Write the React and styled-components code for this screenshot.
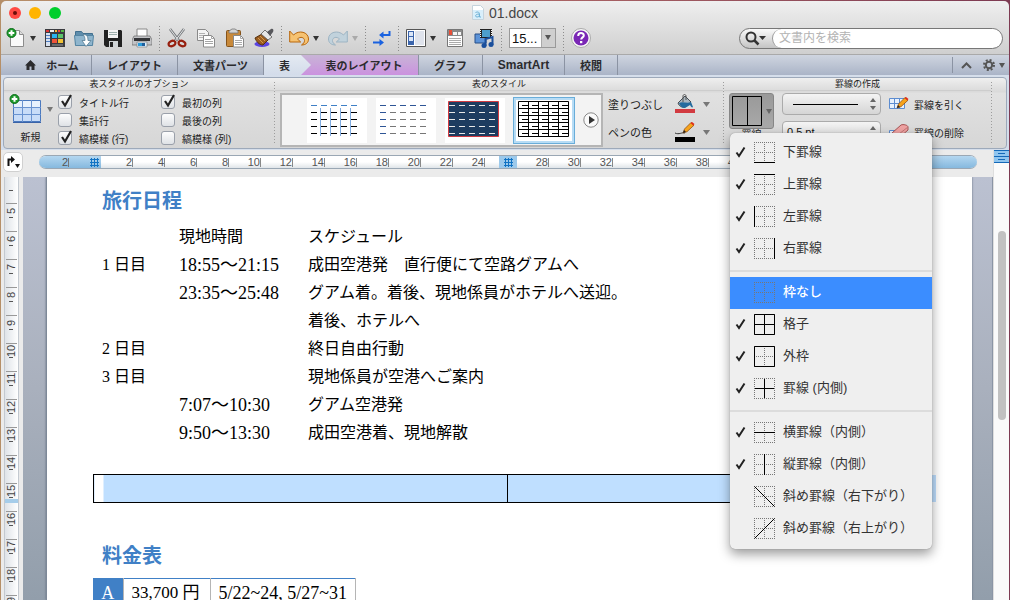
import { useState } from "react";
import styled, { createGlobalStyle, css } from "styled-components";

const sans = `"Liberation Sans", "Noto Sans CJK JP", sans-serif`;
const serif = `"Liberation Serif", "Noto Sans CJK JP", serif`;

const GlobalStyle = createGlobalStyle`
  * {
    box-sizing: border-box;
  }

  body {
    margin: 0;
    font-family: ${sans};
    color: #222;
    background: linear-gradient(90deg, #b58f68, #b9716a 40%, #7d3a52);
  }

  button {
    padding: 0;
    border: 0;
    background: none;
    color: inherit;
    font-family: inherit;
  }
`;

const Window = styled.div`
  display: flex;
  flex-direction: column;
  height: 100vh;
  overflow: hidden;
  border: solid transparent;
  border-width: 1px 1px 0;
`;

/* title bar and toolbar */

const Chrome = styled.header`
  border-bottom: 1px solid #a9a9a9;
  border-radius: 5px 5px 0 0;
  background: linear-gradient(#efefef, #cfcfcf);
`;

const TitleBar = styled.div`
  display: grid;
  grid-template-columns: 1fr auto 1fr;
  align-items: center;
  height: 23px;
  padding: 0 8px;
`;

const Lights = styled.div`
  display: flex;
  gap: 8px;
`;

const Light = styled.button`
  display: grid;
  place-items: center;
  width: 12px;
  height: 12px;
  border-radius: 50%;
  background: ${(props) => props.$color};

  i {
    width: 4px;
    height: 4px;
    border-radius: 50%;
    background: #6b0d0a;
  }
`;

const Title = styled.h1`
  display: flex;
  align-items: center;
  gap: 5px;
  margin: 0;
  font-size: 14px;
  font-weight: normal;
  color: #454545;
`;

const Toolbar = styled.div`
  display: flex;
  align-items: center;
  height: 30px;
  padding: 0 6px 2px 5px;
`;

const Tools = styled.div`
  display: flex;
  align-items: center;
  gap: 9px;
`;

const Split = styled.div`
  display: flex;
  align-items: center;
  gap: 4px;
`;

const ToolButton = styled.button`
  display: grid;
  place-items: center;
  width: ${(props) => props.$width || 20}px;
  height: 22px;
`;

const Divider = styled.div`
  width: 1px;
  height: 25px;
  margin: 0 7px;
  background: repeating-linear-gradient(#8d8d8d 0 1px, transparent 1px 3px);
`;

const ZoomBox = styled.label`
  position: relative;
  display: flex;
  width: 47px;
  height: 20px;
  border: 1px solid #999;
  background: #fff;

  select {
    width: 100%;
    padding: 0 0 0 2px;
    border: 0;
    appearance: none;
    background: linear-gradient(90deg, #fff 31px, #a9a9a9 31px 32px, #cfcfcf 32px);
    font: 13px ${sans};
    color: #111;
  }

  svg {
    position: absolute;
    right: 4px;
    top: 6px;
    pointer-events: none;
  }
`;

const Search = styled.label`
  display: flex;
  align-items: center;
  width: 264px;
  height: 21px;
  margin-left: auto;
  padding-left: 5px;
  border: 1px solid #777;
  border-radius: 11px;
  background: linear-gradient(#fafafa, #c4c4c4);
  overflow: hidden;

  input {
    flex: 1;
    min-width: 0;
    height: 19px;
    margin-left: 6px;
    padding: 0 6px;
    border: 0;
    border-left: 1px solid #999;
    border-radius: 10px;
    outline: 0;
    background: #fff;
    font: 12px/19px ${sans};
  }

  input::placeholder {
    color: #b3b3b3;
  }
`;

/* ribbon tabs */

const TabBar = styled.nav`
  display: flex;
  height: 20px;
  background: linear-gradient(#cfd5e0, #aab4c7);
`;

const Tab = styled.button`
  display: flex;
  align-items: center;
  justify-content: center;
  gap: 10px;
  width: ${(props) => props.$width}px;
  padding-left: ${(props) => (props.$kind === "home" ? 12 : 0)}px;
  border-right: 1px solid #8b93a3;
  font-size: ${(props) => (props.$latin ? 12 : 11)}px;
  font-weight: bold;
  color: #2b2b2e;

  ${(props) =>
    props.$kind === "active" &&
    css`
      z-index: 1;
      margin-right: -10px;
      padding-right: 6px;
      border-right: 0;
      background: linear-gradient(#e4eaf2, #d3dcea);
      clip-path: polygon(0 0, 37px 0, 100% 50%, 37px 100%, 0 100%);
    `}

  ${(props) =>
    props.$kind === "context" &&
    css`
      padding-left: 9px;
      background: linear-gradient(#c8b4d6, #cb92df);
    `}
`;

const TabTools = styled.div`
  display: flex;
  align-items: center;
  gap: 11px;
  height: 16px;
  margin: 2px 4px 2px auto;
  padding-left: 8px;
  border-left: 1px solid #8b93a3;

  button {
    display: flex;
    align-items: center;
    gap: 4px;
  }
`;

/* ribbon */

const RibbonFrame = styled.div`
  padding: 2px 2px 1px;
  background: #d5deeb;
`;

const Ribbon = styled.section`
  display: flex;
  height: 72px;
  padding-right: 14px;
  border: 1px solid #9da9ba;
  border-radius: 4px;
  background: linear-gradient(#efefef, #d9d9d9 14px, #e1e1e1 15px, #d6d6d6);
`;

const Group = styled.div`
  display: flex;
  flex-direction: column;
  flex: ${(props) => (props.$grow ? "1 0 auto" : "0 0 auto")};
  width: ${(props) => (props.$width ? `${props.$width}px` : "auto")};

  h2 {
    height: 13px;
    margin: 0;
    border-bottom: 1px solid #cdcdcd;
    font-size: 9px;
    font-weight: normal;
    line-height: 13px;
    text-align: center;
  }
`;

const GroupLine = styled.div`
  width: 1px;
  margin: 4px 0;
  background: repeating-linear-gradient(#9d9d9d 0 1px, transparent 1px 3px);
`;

const GroupBody = styled.div`
  display: flex;
  flex: 1;
  padding: 2px 0 0 5px;
`;

const NewTable = styled.button`
  display: flex;
  flex-direction: column;
  justify-content: space-between;
  width: 47px;
  padding: 1px 0 4px;
  font-size: 10px;

  span {
    width: 43px;
    line-height: 12px;
  }
`;

const CheckGrid = styled.div`
  display: grid;
  grid-template-columns: 103px auto;
  grid-auto-rows: 18px;
  align-content: start;
  padding-left: 2px;
`;

const Check = styled.label`
  position: relative;
  display: flex;
  align-items: center;
  gap: 7px;
  font-size: 10px;
  white-space: nowrap;

  input {
    width: 14px;
    height: 14px;
    margin: 0;
    appearance: none;
    border: 1px solid #9aa0aa;
    border-radius: 3px;
    background: linear-gradient(#fdfdfd, #dfe2e6);
  }

  svg {
    position: absolute;
    left: 1px;
    top: 1px;
    pointer-events: none;
  }
`;

const Gallery = styled.div`
  display: flex;
  align-items: center;
  gap: 9px;
  width: 323px;
  height: 54px;
  padding: 0 4px 0 25px;
  border: 2px solid #b5b5b5;
  background: #f3f3f3;
`;

const Thumb = styled.button`
  display: flex;
  width: 60px;
  height: 45px;
  background: #fff;
  box-shadow: ${(props) => (props.$selected ? "0 0 0 1px #69add9, inset 0 0 0 2px #b7dcf5" : "none")};
`;

const Stack = styled.div`
  display: flex;
  flex-direction: column;
  gap: 6px;
  padding-left: ${(props) => props.$left}px;
`;

const RowButton = styled.button`
  display: flex;
  align-items: center;
  height: 22px;
  font-size: ${(props) => props.$size}px;
  white-space: nowrap;
  gap: 5px;

  b {
    width: 61px;
    font-weight: normal;
    text-align: left;
  }
`;

const BorderPicker = styled.div`
  position: relative;
  width: 45px;
  font-size: 10px;
  line-height: 12px;
  text-align: center;
`;

const BorderButton = styled.button`
  display: flex;
  align-items: center;
  gap: 3px;
  width: 45px;
  height: 36px;
  padding-left: 2px;
  border: 1px solid #868686;
  border-radius: 3px;
  background: linear-gradient(#999, #a9a9a9);
`;

const LineSelect = styled.label`
  position: relative;
  display: flex;
  width: 99px;
  height: 22px;

  select {
    width: 100%;
    padding: 0 20px 0 4px;
    appearance: none;
    border: 1px solid #ababab;
    border-radius: 4px;
    background: linear-gradient(#f4f4f4, #d5d5d5);
    font: 11px ${sans};
    color: #111;
  }

  svg {
    position: absolute;
    inset: 0;
    pointer-events: none;
  }
`;

/* border menu */

const Menu = styled.div`
  position: absolute;
  z-index: 10;
  left: 1px;
  top: 40px;
  width: 202px;
  padding: 4px 0;
  border-radius: 5px;
  background: #efefef;
  box-shadow: 0 0 1px #777, 0 5px 12px rgba(0, 0, 0, 0.4);

  hr {
    height: 2px;
    margin: 5px 0;
    border: 0;
    background: #dcdcdc;
  }
`;

const MenuItem = styled.button`
  display: grid;
  grid-template-columns: 19px 21px auto;
  align-items: center;
  width: 100%;
  height: 32px;
  padding: 0 0 2px 5px;
  text-align: left;
  font-size: 13px;
  font-weight: ${(props) => (props.$active ? 500 : 400)};
  color: ${(props) => (props.$active ? "#fff" : "#333")};
  background: ${(props) => (props.$active ? "#3b8dff" : "none")};

  span {
    grid-column: 3;
    padding-left: 8px;
    line-height: 20px;
  }

  .glyph {
    grid-column: 2;
  }
`;

/* rulers and document */

const Workspace = styled.main`
  display: flex;
  flex: 1;
  min-height: 0;
  background: #ebebeb;
`;

const Editor = styled.div`
  display: flex;
  flex-direction: column;
  flex: 1;
  min-width: 0;
`;

const RulerRow = styled.div`
  display: flex;
  align-items: center;
  height: 27px;
  padding: 0 16px 3px 2px;
`;

const TabStop = styled.button`
  display: grid;
  place-items: center;
  width: 20px;
  height: 20px;
  margin-right: 16px;
  border: 1px solid #d0d0d0;
  border-radius: 5px;
  background: #fff;
`;

const Ruler = styled.div`
  display: flex;
  flex: 1;
  min-width: 0;
  height: 14px;
  border: solid #9aa7b4;
  border-width: 1px 0;
  border-radius: 7px;
  background: linear-gradient(#fff, #fff 50%, #e0e5e9);
  overflow: hidden;
  font-size: 11px;
  color: #555;
`;

const RulerEdge = styled.div`
  display: flex;
  flex: 0 0 ${(props) => props.$width}px;
  align-items: center;
  gap: 21px;
  background: linear-gradient(#b4d7f0, #86b9de);

  span {
    width: 30px;
    border-right: 1px solid #777;
    line-height: 9px;
    text-align: right;
  }
`;

const RulerMarks = styled.div`
  display: flex;
  flex: 1;
  min-width: 0;
  align-items: center;
  overflow: hidden;
`;

const Mark = styled.div`
  display: flex;
  flex: 0 0 32px;
  justify-content: flex-end;
  height: 9px;
  border-right: 1px solid #888;
  line-height: 9px;
`;

const ColumnMark = styled.div`
  display: grid;
  flex: 0 0 32px;
  height: 12px;
  padding-left: 14px;
  background: linear-gradient(90deg, transparent 14px, #9cc9eb 14px);
  place-items: center;
`;

const Canvas = styled.div`
  display: flex;
  flex: 1;
  min-height: 0;
  overflow: hidden;
`;

const SideRuler = styled.div`
  position: relative;
  flex: 0 0 15px;
  margin: 0 4px 0 3px;
  border: solid #c3c9d0;
  border-width: 0 1px;
  background: linear-gradient(90deg, #dfe3e8, #fff);
  overflow: hidden;
  font-size: 11px;
  color: #444;
`;

const SideMark = styled.div`
  display: flex;
  flex-direction: column;
  height: ${(props) => (props.$first ? 26 : 28)}px;
  margin: 0 1px;
  border-top: ${(props) => (props.$first ? 0 : 1)}px solid #999;

  span {
    height: 13px;
    writing-mode: vertical-rl;
    transform: rotate(180deg);
    line-height: 11px;
    text-align: center;
  }

  i {
    width: 4px;
    height: 1px;
    margin-left: 3px;
    background: #555;
  }
`;

const RowMark = styled.div`
  position: absolute;
  inset: 322px 0 auto;
  height: 4px;
  background: #a6cdea;
`;

const Desk = styled.div`
  display: flex;
  flex: 1;
  min-width: 0;
  padding: 0 20px 0 23px;
  border: solid #8b95a5;
  border-width: 0 1px 0 0;
  background: linear-gradient(#bbc1d1, #a9b0bd 50%, #929eab);
`;

const Page = styled.article`
  flex: 1;
  min-width: 0;
  padding: 10px 51px 0 46px;
  border: solid #7d8898;
  border-width: 0 0 0 1px;
  background: #fff;
  box-shadow: 0 0 2px #5f6a7a;
  font-family: ${serif};
  color: #000;
`;

const Heading = styled.h2`
  margin: 0 9px;
  font-size: 20px;
  font-weight: bold;
  line-height: 28px;
  color: #4080c6;
`;

const Schedule = styled.table`
  margin-top: 8px;
  border-collapse: collapse;
  font-size: 16px;

  td {
    height: 28px;
    padding: 0 0 0 9px;
    line-height: 24px;
    white-space: nowrap;
  }

  td:nth-child(1) {
    width: 77px;
  }

  td:nth-child(2) {
    width: 129px;
    font-size: ${(props) => props.$timeSize}px;
  }

  tr:first-child td {
    font-size: 16px;
  }
`;

const SelectedRow = styled.div`
  display: flex;
  margin: 27px -15px 39px 0;

  &::after {
    content: "";
    flex: 0 0 15px;
    margin: 1px 0;
    background: #bfdfff;
  }

  table {
    flex: 1;
    width: 100%;
    border-collapse: collapse;
  }

  td {
    height: 28px;
    width: 50%;
    padding: 0;
    border: 1px solid #000;
    background: #bfdfff;
  }

  td:first-child {
    background: linear-gradient(90deg, #fff 9px, #bfdfff 9px);
  }
`;

const Prices = styled.table`
  margin-top: 8px;
  border-collapse: collapse;
  border-top: 1px solid #4080c6;
  font-size: 18px;

  th,
  td {
    height: 28px;
    padding: 0 8px;
    border-right: 1px solid #b5b5b5;
    line-height: 24px;
    white-space: nowrap;
  }

  th {
    width: 30px;
    background: #4080c6;
    font-weight: normal;
    color: #fff;
  }

  td:nth-child(2) {
    width: 87px;
    font-size: 17px;
  }
`;

const ScrollColumn = styled.div`
  display: flex;
  flex-direction: column;
  flex: 0 0 16px;
  border-left: 1px solid #dedede;
  background: #fafafa;
`;

const SplitHandle = styled.button`
  display: flex;
  height: 13px;
`;

const Thumbbar = styled.div`
  width: 8px;
  height: 189px;
  margin: 68px 0 0 4px;
  border-radius: 4px;
  background: #c1c1c1;
`;

function Svg({ w = 20, h = 20, children, ...rest }) {
  return (
    <svg width={w} height={h} viewBox={`0 0 ${w} ${h}`} fill="none" aria-hidden="true" {...rest}>
      {children}
    </svg>
  );
}

function Caret({ color = "#333" }) {
  return (
    <Svg w={6} h={5}>
      <path d="M0 0h6L3 5z" fill={color} />
    </Svg>
  );
}

function Plus() {
  return (
    <g>
      <circle cx="5.5" cy="5" r="4.5" fill="#1e9a2c" stroke="#0b6d19" />
      <path d="M5.5 2.2v5.6M2.7 5h5.6" stroke="#fff" strokeWidth="2" />
    </g>
  );
}

function Pencil({ x = 0, y = 0 }) {
  return (
    <g transform={`translate(${x} ${y})`}>
      <path d="M0 11l1.5-4L8 .5l3 2.7-7 6.5z" fill="#f6a31c" stroke="#87450b" strokeWidth=".7" />
      <path d="M7.5 1L9 0l2.5 2-1.2 1.6z" fill="#e22b1a" />
      <path d="M0 11l1-3 2 2z" fill="#222" />
    </g>
  );
}

const icons = {
  newDoc: (
    <Svg>
      <path d="M4.5 2.5h9l4 4v12h-13z" fill="#fafafa" stroke="#8c8c8c" />
      <path d="M13.5 2.5v4h4" fill="#ddd" stroke="#8c8c8c" />
      <Plus />
    </Svg>
  ),
  gallery: (
    <Svg>
      <path d="M0 1h20v18H0z" fill="#3b3c40" />
      <path d="M1 5h4v13H1z" fill="#d7e0ee" />
      <path d="M1 7.500h4M1 10.500h4M1 13.500h4" stroke="#4f7dc2" />
      <path d="M1 2h3v2H1z" fill="#d33" />
      <path d="M5 2h4v2H5z" fill="#eee" />
      <path d="M10 2h2v2h-2z" fill="#fb3" />
      <path d="M13 2h2v2h-2z" fill="#e44" />
      <path d="M16 2h3v2h-3z" fill="#5b4" />
      <path d="M7 6h5v4H7z" fill="#2bb4ee" />
      <path d="M13 6h5v4h-5z" fill="#5cc46a" />
      <path d="M7 11h5v4H7z" fill="#f0553b" />
      <path d="M13 11h5v4h-5z" fill="#f2c336" />
      <path d="M7 17h11" stroke="#999" />
    </Svg>
  ),
  open: (
    <Svg>
      <path d="M1.500 17V3.500h6l1.500 2h9.500V17z" fill="#5e8dac" stroke="#42708f" />
      <path d="M.5 7.500h19l-1 10h-17z" fill="#8fb5cd" stroke="#5585a3" />
      <path d="M9 6.500c4 0 5 2 5 6h3l-5 6-4-6h3c0-3-.5-4-2-6z" fill="#fff" stroke="#587d95" strokeWidth=".8" />
    </Svg>
  ),
  save: (
    <Svg>
      <path d="M1 2h17l1 1v16H3l-2-2z" fill="#222" />
      <path d="M5 2h10v8H5z" fill="#f4f4f4" />
      <path d="M6 4.500h8M6 6.500h8" stroke="#9eb0ad" />
      <path d="M6 13h9v6H6z" fill="#d0d4d6" />
      <path d="M7 14h3v5H7z" fill="#222" />
    </Svg>
  ),
  print: (
    <Svg>
      <path d="M5 1h10v9H5z" fill="#fff" stroke="#888" />
      <path d="M2 8h16l2 4v5H0v-5z" fill="#c2c3c6" stroke="#666" strokeWidth=".7" />
      <path d="M2 10h16v3H2z" fill="#343538" />
      <path d="M5 14h10v5H5z" fill="#dceefc" stroke="#777" strokeWidth=".6" />
      <path d="M6 15h4v3H6z" fill="#2b9edc" />
      <path d="M10 15h3v3h-3z" fill="#1e5e9c" />
    </Svg>
  ),
  cut: (
    <Svg>
      <path d="M3 1l10 13M17 1L7 14" stroke="#74777a" strokeWidth="2.600" />
      <path d="M3 1l9 12M17 1L8 13" stroke="#e5e7e9" />
      <ellipse cx="5" cy="15.500" rx="3.600" ry="2.600" stroke="#97200f" strokeWidth="2.200" transform="rotate(-25 5 15.500)" />
      <ellipse cx="15" cy="15.500" rx="3.600" ry="2.600" stroke="#97200f" strokeWidth="2.200" transform="rotate(25 15 15.500)" />
    </Svg>
  ),
  copy: (
    <Svg>
      <path d="M1.500 1.500h8l3 3v8h-11z" fill="#f5f5f5" stroke="#8a8a8a" />
      <path d="M3 5.500h6M3 7.500h6M3 9.500h6" stroke="#b3b3b3" />
      <path d="M7.500 7.500h8l3 3v8.500h-11z" fill="#fff" stroke="#8a8a8a" />
      <path d="M15.500 7.500v3h3M9 11.500h6M9 13.500h8M9 15.500h8" stroke="#a5a5a5" />
    </Svg>
  ),
  paste: (
    <Svg>
      <rect x="1.500" y="2.500" width="14" height="16" rx="1" fill="#c8893a" stroke="#85531a" />
      <path d="M4 5V3l3-2h3l3 2v2z" fill="#d4d4d4" stroke="#777" strokeWidth=".8" />
      <path d="M8.500 7.500h7l3 3v8.500h-10z" fill="#fff" stroke="#888" />
      <path d="M15.500 7.500v3h3M10 12.500h7M10 14.500h7M10 16.500h7" stroke="#aaa" />
    </Svg>
  ),
  brush: (
    <Svg>
      <ellipse cx="8" cy="16" rx="7.500" ry="3" fill="#5b45e0" />
      <path d="M1 10l7-4 6 6-5 5c-4 0-7-4-8-7z" fill="#9a5d20" stroke="#55300c" />
      <path d="M4 10l5 5M6 8l5 5" stroke="#d49a4a" />
      <path d="M7 6l4-4 7 7-4 3z" fill="#e6e6e6" stroke="#555" strokeWidth=".8" />
      <path d="M13 4l4-3c2-1 3 1 2 3l-3 4z" fill="#57575b" />
    </Svg>
  ),
  undo: (
    <Svg>
      <path d="M.7 3v11h11L8.500 11c3-3 7-1.500 7 1.500 0 2-1 3-3 4.500 4 0 7-2 7-6C19.500 4 10 1.500 4.500 7z" fill="#f6c271" stroke="#b8660b" />
    </Svg>
  ),
  redo: (
    <Svg>
      <path d="M19.300 3v11h-11l3.200-3c-3-3-7-1.500-7 1.500 0 2 1 3 3 4.500-4 0-7-2-7-6C.5 4 10 1.500 15.500 7z" fill="#c1d2dc" stroke="#9db4c3" />
    </Svg>
  ),
  marks: (
    <Svg w={18} h={20}>
      <path d="M16.500 3v4H9M0 14.500h8" stroke="#1a62e0" strokeWidth="2" />
      <path d="M6 7l4.500-3.500v7zM11 14.500L6.500 11v7z" fill="#1a62e0" />
    </Svg>
  ),
  sidebar: (
    <Svg>
      <path d="M.5 1.500h19v17H.5z" fill="#fff" stroke="#555" />
      <path d="M2 3h6v14H2z" fill="#3b65ac" />
      <path d="M3 4h4v4H3zM3 9h4v4H3z" fill="#dce7f8" />
      <path d="M9 3h9v14H9z" fill="#dfe3ec" />
    </Svg>
  ),
  notebook: (
    <Svg>
      <path d="M2.500 1.500h15v17h-15z" fill="#fff" stroke="#777" />
      <path d="M3 2h14v6H3z" fill="#8a8a8a" />
      <path d="M4 2h3v5H4z" fill="#e84f38" />
      <path d="M8 4h4v3H8zM13 4h3v3h-3z" fill="#f5f5f5" />
      <path d="M4 10.500h12M4 12.500h12M4 14.500h12M4 16.500h12" stroke="#aaa" />
    </Svg>
  ),
  media: (
    <Svg>
      <path d="M1 6h11v9H1z" fill="#5c93d8" stroke="#274e88" />
      <path d="M6 1h12v9H6z" fill="#222" />
      <path d="M8 2h8v7H8z" fill="#4d9ecb" />
      <path d="M6.500 2v8M17.500 2v8" stroke="#fff" strokeDasharray="1 1" />
      <path d="M11.500 18V11l7-2v8" stroke="#1a4f9c" strokeWidth="2" />
      <circle cx="10" cy="17.500" r="2.500" fill="#1a4f9c" />
      <circle cx="17" cy="16.500" r="2.500" fill="#1a4f9c" />
    </Svg>
  ),
  help: (
    <Svg>
      <circle cx="10" cy="10" r="9.500" fill="#f5f5f5" stroke="#aaa" />
      <circle cx="10" cy="10" r="7.500" fill="#7a27b5" />
      <path d="M7.200 8c0-4 5.600-3.600 5.600-.6 0 2-2.600 2-2.600 4.100" stroke="#fff" strokeWidth="2" />
      <path d="M9 13h2.300v2.200H9z" fill="#fff" />
    </Svg>
  ),
  bucket: (
    <Svg w={21} h={20}>
      <path d="M1 15h20v4H1z" fill="#d23b41" />
      <path d="M4 9l7-7 6 6-6 5c-3 1-6-1-7-4z" fill="#a9b6bf" stroke="#454d54" />
      <path d="M5 9c4-2 8 1 12-1l2 5c-1 1-2 0-3-2l-5 3c-3 0-5-2-6-5z" fill="#246b9e" />
      <path d="M9 8V2c0-2 3-2 3 0v4" stroke="#555" />
    </Svg>
  ),
  pen: (
    <Svg w={21} h={20}>
      <path d="M1 15h20v5H1z" fill="#000" />
      <path d="M1 11c4 2 7-1 10 0" stroke="#333" />
      <Pencil x={9} />
    </Svg>
  ),
  draw: (
    <Svg>
      <path d="M.5 4.500h15v10H.5zM.5 9.500h15M5.500 4v11M10.500 4v11" fill="#e8f1fd" stroke="#5c8cd0" />
      <Pencil x={8} y={3} />
    </Svg>
  ),
  erase: (
    <Svg>
      <path d="M.5 8.500h12v10H.5zM6.500 8v10" fill="#e8f1fd" stroke="#5c8cd0" />
      <path d="M3 11l9-8c2-1 7 0 7 2v3l-9 8c-3 0-7-1-7-5z" fill="#efa2a2" stroke="#a65353" />
      <path d="M3 11c2 2 5 2 7 1l9-7" stroke="#c47575" />
    </Svg>
  ),
};

const firstTools = ["gallery", "open", "save", "print"];
const editTools = ["cut", "copy", "paste", "brush"];

function Tool({ icon, label, width }) {
  return (
    <ToolButton $width={width} aria-label={label || icon}>
      {icons[icon]}
    </ToolButton>
  );
}

function CheckBox({ label, on }) {
  const [checked, setChecked] = useState(on);

  return (
    <Check>
      <input type="checkbox" checked={checked} onChange={() => setChecked(!checked)} />
      {checked && (
        <Svg w={14} h={14}>
          <path d="M3 7l3 4.500L12 1" stroke="#222" strokeWidth="2.200" />
        </Svg>
      )}
      {label}
    </Check>
  );
}

const columns = [0, 1, 2, 3, 4];
const lines = [0, 1, 2, 3, 4];

function StyleThumb({ kind }) {
  const filled = kind === "filled";
  const grid = kind === "grid";

  function dashColor(row, col) {
    if (filled) return "#e8e8e8";
    if (grid) return "#000";
    if (kind === "blue") return row === 0 ? "#4080c6" : "#000";
    return row === 0 || col === 0 ? "#2e5596" : "#777";
  }

  return (
    <Svg w={60} h={45}>
      {filled && <path d="M3.500 3.500h50v35h-50z" fill="#1d3c60" stroke="#d23b41" />}
      {grid && (
        <path
          d="M4.500 3.500h50v35h-50zM4 10.500h50M4 17.500h50M4 24.500h50M4 31.500h50M14.500 4v34M24.500 4v34M34.500 4v34M44.500 4v34"
          stroke="#000"
        />
      )}
      {lines.map((row) =>
        columns.map((col) => (
          <path
            key={`${row}-${col}`}
            d={`M${4 + col * 10 + (grid ? 4 : 0)} ${7.5 + row * 7}h6`}
            stroke={dashColor(row, col)}
          />
        ))
      )}
      {kind === "blue" && <path d="M13.500 10v28M23.500 10v28M33.500 10v28M43.500 10v28" stroke="#7fabe0" />}
    </Svg>
  );
}

const glyphPaths = {
  bottom: "M0 20.500h21",
  top: "M0 .5h21",
  left: "M.5 0v21",
  right: "M20.500 0v21",
  none: "",
  all: "M.5 .5h20v20H.5zM0 10.500h21M10.500 0v21",
  outside: "M.5 .5h20v20H.5z",
  inside: "M1 10.500h19M10.500 1v19",
  horizontal: "M0 10.500h21",
  vertical: "M10.500 0v21",
  down: "M.5 .5l20 20",
  up: "M.5 20.500l20-20",
};

function BorderGlyph({ kind }) {
  return (
    <Svg w={21} h={21} className="glyph">
      <path d="M.5 0v21M10.500 0v21M20.500 0v21M0 .5h21M0 10.500h21M0 20.500h21" stroke="#777" strokeDasharray="1 1" />
      <path d={glyphPaths[kind]} stroke="#000" />
    </Svg>
  );
}

const menuGroups = [
  [
    { kind: "bottom", label: "下罫線", on: true },
    { kind: "top", label: "上罫線", on: true },
    { kind: "left", label: "左罫線", on: true },
    { kind: "right", label: "右罫線", on: true },
  ],
  [
    { kind: "none", label: "枠なし", active: true },
    { kind: "all", label: "格子", on: true },
    { kind: "outside", label: "外枠", on: true },
    { kind: "inside", label: "罫線 (内側)", on: true },
  ],
  [
    { kind: "horizontal", label: "横罫線（内側）", on: true },
    { kind: "vertical", label: "縦罫線（内側）", on: true },
    { kind: "down", label: "斜め罫線（右下がり）" },
    { kind: "up", label: "斜め罫線（右上がり）" },
  ],
];

function BorderMenu() {
  return (
    <Menu role="menu">
      {menuGroups.map((items, i) => (
        <div key={i}>
          {i > 0 && <hr />}
          {items.map((item) => (
            <MenuItem key={item.kind} role="menuitem" $active={item.active}>
              {item.on && (
                <Svg w={12} h={12}>
                  <path d="M1.500 6.500L4 10l5.500-8.500" stroke="#222" strokeWidth="2" />
                </Svg>
              )}
              <BorderGlyph kind={item.kind} />
              <span>{item.label}</span>
            </MenuItem>
          ))}
        </div>
      ))}
    </Menu>
  );
}

function WindowChrome() {
  return (
    <Chrome>
      <TitleBar>
        <Lights>
          <Light $color="#ff4a44" aria-label="閉じる">
            <i />
          </Light>
          <Light $color="#ffb400" aria-label="しまう" />
          <Light $color="#00ce2c" aria-label="拡大" />
        </Lights>
        <Title>
          <Svg w={12} h={15}>
            <path d="M.5.5h8l3 3v11H.5z" fill="#fff" stroke="#c5d3dc" />
            <path d="M1 5h10v9H1z" fill="#d9effb" />
            <path d="M3.500 7.500c4-1.500 4 .5 4 4.500M7.500 9c-5 0-4.500 3-2.500 3s2.500-1 2.500-3v3h1.500" stroke="#6db1d6" />
          </Svg>
          01.docx
        </Title>
      </TitleBar>
      <Toolbar>
        <Tools>
          <Split>
            <Tool icon="newDoc" />
            <Caret />
          </Split>
          {firstTools.map((icon) => (
            <Tool key={icon} icon={icon} />
          ))}
        </Tools>
        <Divider />
        <Tools>
          {editTools.map((icon) => (
            <Tool key={icon} icon={icon} />
          ))}
        </Tools>
        <Divider />
        <Tools>
          <Split>
            <Tool icon="undo" />
            <Caret />
          </Split>
          <Split>
            <Tool icon="redo" />
            <Caret color="#aaa" />
          </Split>
        </Tools>
        <Divider />
        <Tool icon="marks" width={18} />
        <Divider />
        <Tools>
          <Split>
            <Tool icon="sidebar" />
            <Caret />
          </Split>
          <Tool icon="notebook" />
          <Tool icon="media" />
        </Tools>
        <Divider />
        <ZoomBox>
          <select aria-label="ズーム">
            <option>15...</option>
          </select>
          <Caret color="#555" />
        </ZoomBox>
        <Divider />
        <Tool icon="help" />
        <Search>
          <Svg w={21} h={15}>
            <circle cx="6" cy="6" r="4.500" stroke="#333" strokeWidth="2" />
            <path d="M9.500 9.500l4 4" stroke="#333" strokeWidth="2.500" />
            <path d="M14 5h7l-3.500 4z" fill="#333" />
          </Svg>
          <input type="search" placeholder="文書内を検索" aria-label="文書内を検索" />
        </Search>
      </Toolbar>
    </Chrome>
  );
}

function Tabs() {
  return (
    <TabBar>
      <Tab $width={91} $kind="home">
        <Svg w={11} h={10}>
          <path d="M5.500 0L11 5.500H9.500V10h-3V6.500h-2V10h-3V5.500H0z" fill="#2b2b2e" />
        </Svg>
        ホーム
      </Tab>
      <Tab $width={86}>レイアウト</Tab>
      <Tab $width={86}>文書パーツ</Tab>
      <Tab $width={47} $kind="active">
        表
      </Tab>
      <Tab $width={118} $kind="context">
        表のレイアウト
      </Tab>
      <Tab $width={64}>グラフ</Tab>
      <Tab $width={82} $latin>
        SmartArt
      </Tab>
      <Tab $width={53}>校閲</Tab>
      <TabTools>
        <button aria-label="リボンをたたむ">
          <Svg w={11} h={7}>
            <path d="M1 6l4.500-4.500L10 6" stroke="#555" strokeWidth="2" />
          </Svg>
        </button>
        <button aria-label="設定">
          <Svg w={12} h={12}>
            <circle cx="6" cy="6" r="5" stroke="#555" strokeWidth="2" strokeDasharray="2 1.930" />
            <circle cx="6" cy="6" r="3.200" stroke="#555" strokeWidth="2" />
          </Svg>
          <Caret color="#555" />
        </button>
      </TabTools>
    </TabBar>
  );
}

function RibbonPanel() {
  return (
    <RibbonFrame>
      <Ribbon>
        <Group $width={270}>
          <h2>表スタイルのオプション</h2>
          <GroupBody>
            <NewTable>
              <Split>
                <Svg w={34} h={31}>
                  <path d="M4.500 6.500h27v21h-27z" fill="#c8dcf8" stroke="#4b79be" />
                  <path d="M5 7h26v6H5z" fill="#e8f1fd" />
                  <path d="M4 13.500h28M4 20.500h28M13.500 6v22M22.500 6v22" stroke="#6a93d0" />
                  <path d="M4 28.500h28" stroke="#3a63a8" />
                  <Plus />
                </Svg>
                <Caret color="#777" />
              </Split>
              <span>新規</span>
            </NewTable>
            <CheckGrid>
              <CheckBox label="タイトル行" on />
              <CheckBox label="最初の列" on />
              <CheckBox label="集計行" on={false} />
              <CheckBox label="最後の列" on={false} />
              <CheckBox label="縞模様 (行)" on />
              <CheckBox label="縞模様 (列)" on={false} />
            </CheckGrid>
          </GroupBody>
        </Group>
        <GroupLine />
        <Group $grow>
          <h2>表のスタイル</h2>
          <GroupBody>
            <Gallery>
              <Thumb aria-label="表スタイル 1">
                <StyleThumb kind="blue" />
              </Thumb>
              <Thumb aria-label="表スタイル 2">
                <StyleThumb kind="plain" />
              </Thumb>
              <Thumb aria-label="表スタイル 3">
                <StyleThumb kind="filled" />
              </Thumb>
              <Thumb aria-label="表スタイル 4" $selected>
                <StyleThumb kind="grid" />
              </Thumb>
              <ToolButton $width={16} aria-label="次へ">
                <Svg w={16} h={16}>
                  <circle cx="8" cy="8" r="7.200" fill="#fafafa" stroke="#888" />
                  <path d="M6 4l6 4-6 4z" fill="#333" />
                </Svg>
              </ToolButton>
            </Gallery>
            <Stack $left={5}>
              <RowButton $size={11}>
                <b>塗りつぶし</b>
                {icons.bucket}
                <Svg w={10} h={5}>
                  <path d="M3 0h7L6.500 5z" fill="#777" />
                </Svg>
              </RowButton>
              <RowButton $size={11}>
                <b>ペンの色</b>
                {icons.pen}
                <Svg w={10} h={5}>
                  <path d="M3 0h7L6.500 5z" fill="#777" />
                </Svg>
              </RowButton>
            </Stack>
          </GroupBody>
        </Group>
        <GroupLine />
        <Group $width={267}>
          <h2>罫線の作成</h2>
          <GroupBody>
            <BorderPicker>
              <BorderButton aria-label="罫線" aria-haspopup="menu" aria-expanded="true">
                <Svg w={31} h={31}>
                  <path d="M.5.5h29v29H.5zM15.500 0v30" stroke="#000" />
                </Svg>
                <Caret color="#666" />
              </BorderButton>
              罫線
              <BorderMenu />
            </BorderPicker>
            <Stack $left={8}>
              <LineSelect>
                <select aria-label="線のスタイル">
                  <option></option>
                </select>
                <Svg w={99} h={22}>
                  <path d="M11 11.500h65" stroke="#000" />
                  <path d="M88 9l3-4 3 4zM88 13l3 4 3-4z" fill="#666" />
                </Svg>
              </LineSelect>
              <LineSelect>
                <select aria-label="線の太さ">
                  <option>0.5 pt</option>
                </select>
                <Svg w={99} h={22}>
                  <path d="M88 9l3-4 3 4zM88 13l3 4 3-4z" fill="#666" />
                </Svg>
              </LineSelect>
            </Stack>
            <Stack $left={8}>
              <RowButton $size={10}>
                {icons.draw}
                罫線を引く
              </RowButton>
              <RowButton $size={10}>
                {icons.erase}
                罫線の削除
              </RowButton>
            </Stack>
          </GroupBody>
        </Group>
        <GroupLine />
      </Ribbon>
    </RibbonFrame>
  );
}

function GridHandle() {
  return (
    <Svg w={9} h={9}>
      <path d="M1.500 0v9M4.500 0v9M7.500 0v9M0 1.500h9M0 4.500h9M0 7.500h9" stroke="#1173c4" />
    </Svg>
  );
}

const rulerNumbers = Array.from({ length: 20 }, (_, i) => (i + 1) * 2);
const sideNumbers = Array.from({ length: 15 }, (_, i) => i + 5);

const schedule = [
  ["", "現地時間", "スケジュール"],
  ["1 日目", "18:55〜21:15", "成田空港発　直行便にて空路グアムへ"],
  ["", "23:35〜25:48", "グアム着。着後、現地係員がホテルへ送迎。"],
  ["", "", "着後、ホテルへ"],
  ["2 日目", "", "終日自由行動"],
  ["3 日目", "", "現地係員が空港へご案内"],
  ["", "7:07〜10:30", "グアム空港発"],
  ["", "9:50〜13:30", "成田空港着、現地解散"],
];

function Document() {
  return (
    <Page>
      <Heading>旅行日程</Heading>
      <Schedule $timeSize={18}>
        <tbody>
          {schedule.map((row, i) => (
            <tr key={i}>
              {row.map((cell, j) => (
                <td key={j}>{cell}</td>
              ))}
            </tr>
          ))}
        </tbody>
      </Schedule>
      <SelectedRow>
        <table>
          <tbody>
            <tr>
              <td />
              <td />
            </tr>
          </tbody>
        </table>
      </SelectedRow>
      <Heading>料金表</Heading>
      <Prices>
        <tbody>
          <tr>
            <th>A</th>
            <td>33,700 円</td>
            <td>5/22~24, 5/27~31</td>
          </tr>
        </tbody>
      </Prices>
    </Page>
  );
}

export default function App() {
  return (
    <>
      <GlobalStyle />
      <Window>
        <WindowChrome />
        <Tabs />
        <RibbonPanel />
        <Workspace>
          <Editor>
            <RulerRow>
              <TabStop aria-label="タブ">
                <Svg w={14} h={14}>
                  <path d="M2.500 11V4.500H6" stroke="#111" strokeWidth="2" />
                  <path d="M5 1l4 3.500L5 8zM9 9h5l-2.500 4z" fill="#111" />
                </Svg>
              </TabStop>
              <Ruler>
                <RulerEdge $width={62}>
                  <span>2</span>
                  <GridHandle />
                </RulerEdge>
                <RulerMarks>
                  {rulerNumbers.map((n) =>
                    n === 26 ? (
                      <ColumnMark key={n}>
                        <GridHandle />
                      </ColumnMark>
                    ) : (
                      <Mark key={n}>{n}</Mark>
                    )
                  )}
                </RulerMarks>
                <RulerEdge $width={56} />
              </Ruler>
            </RulerRow>
            <Canvas>
              <SideRuler>
                <SideMark $first>
                  <span />
                  <i />
                </SideMark>
                {sideNumbers.map((n) => (
                  <SideMark key={n}>
                    <span>{n}</span>
                    <i />
                  </SideMark>
                ))}
                <RowMark />
              </SideRuler>
              <Desk>
                <Document />
              </Desk>
            </Canvas>
          </Editor>
          <ScrollColumn>
            <SplitHandle aria-label="分割">
              <Svg w={15} h={13}>
                <path d="M0 0h15v13H0z" fill="#8fc5ef" />
                <path d="M0 .5h15M0 6.500h15M0 12.500h15" stroke="#1469b8" />
                <path d="M4 3.500h7M4 9.500h7" stroke="#1469b8" />
              </Svg>
            </SplitHandle>
            <Thumbbar />
          </ScrollColumn>
        </Workspace>
      </Window>
    </>
  );
}
